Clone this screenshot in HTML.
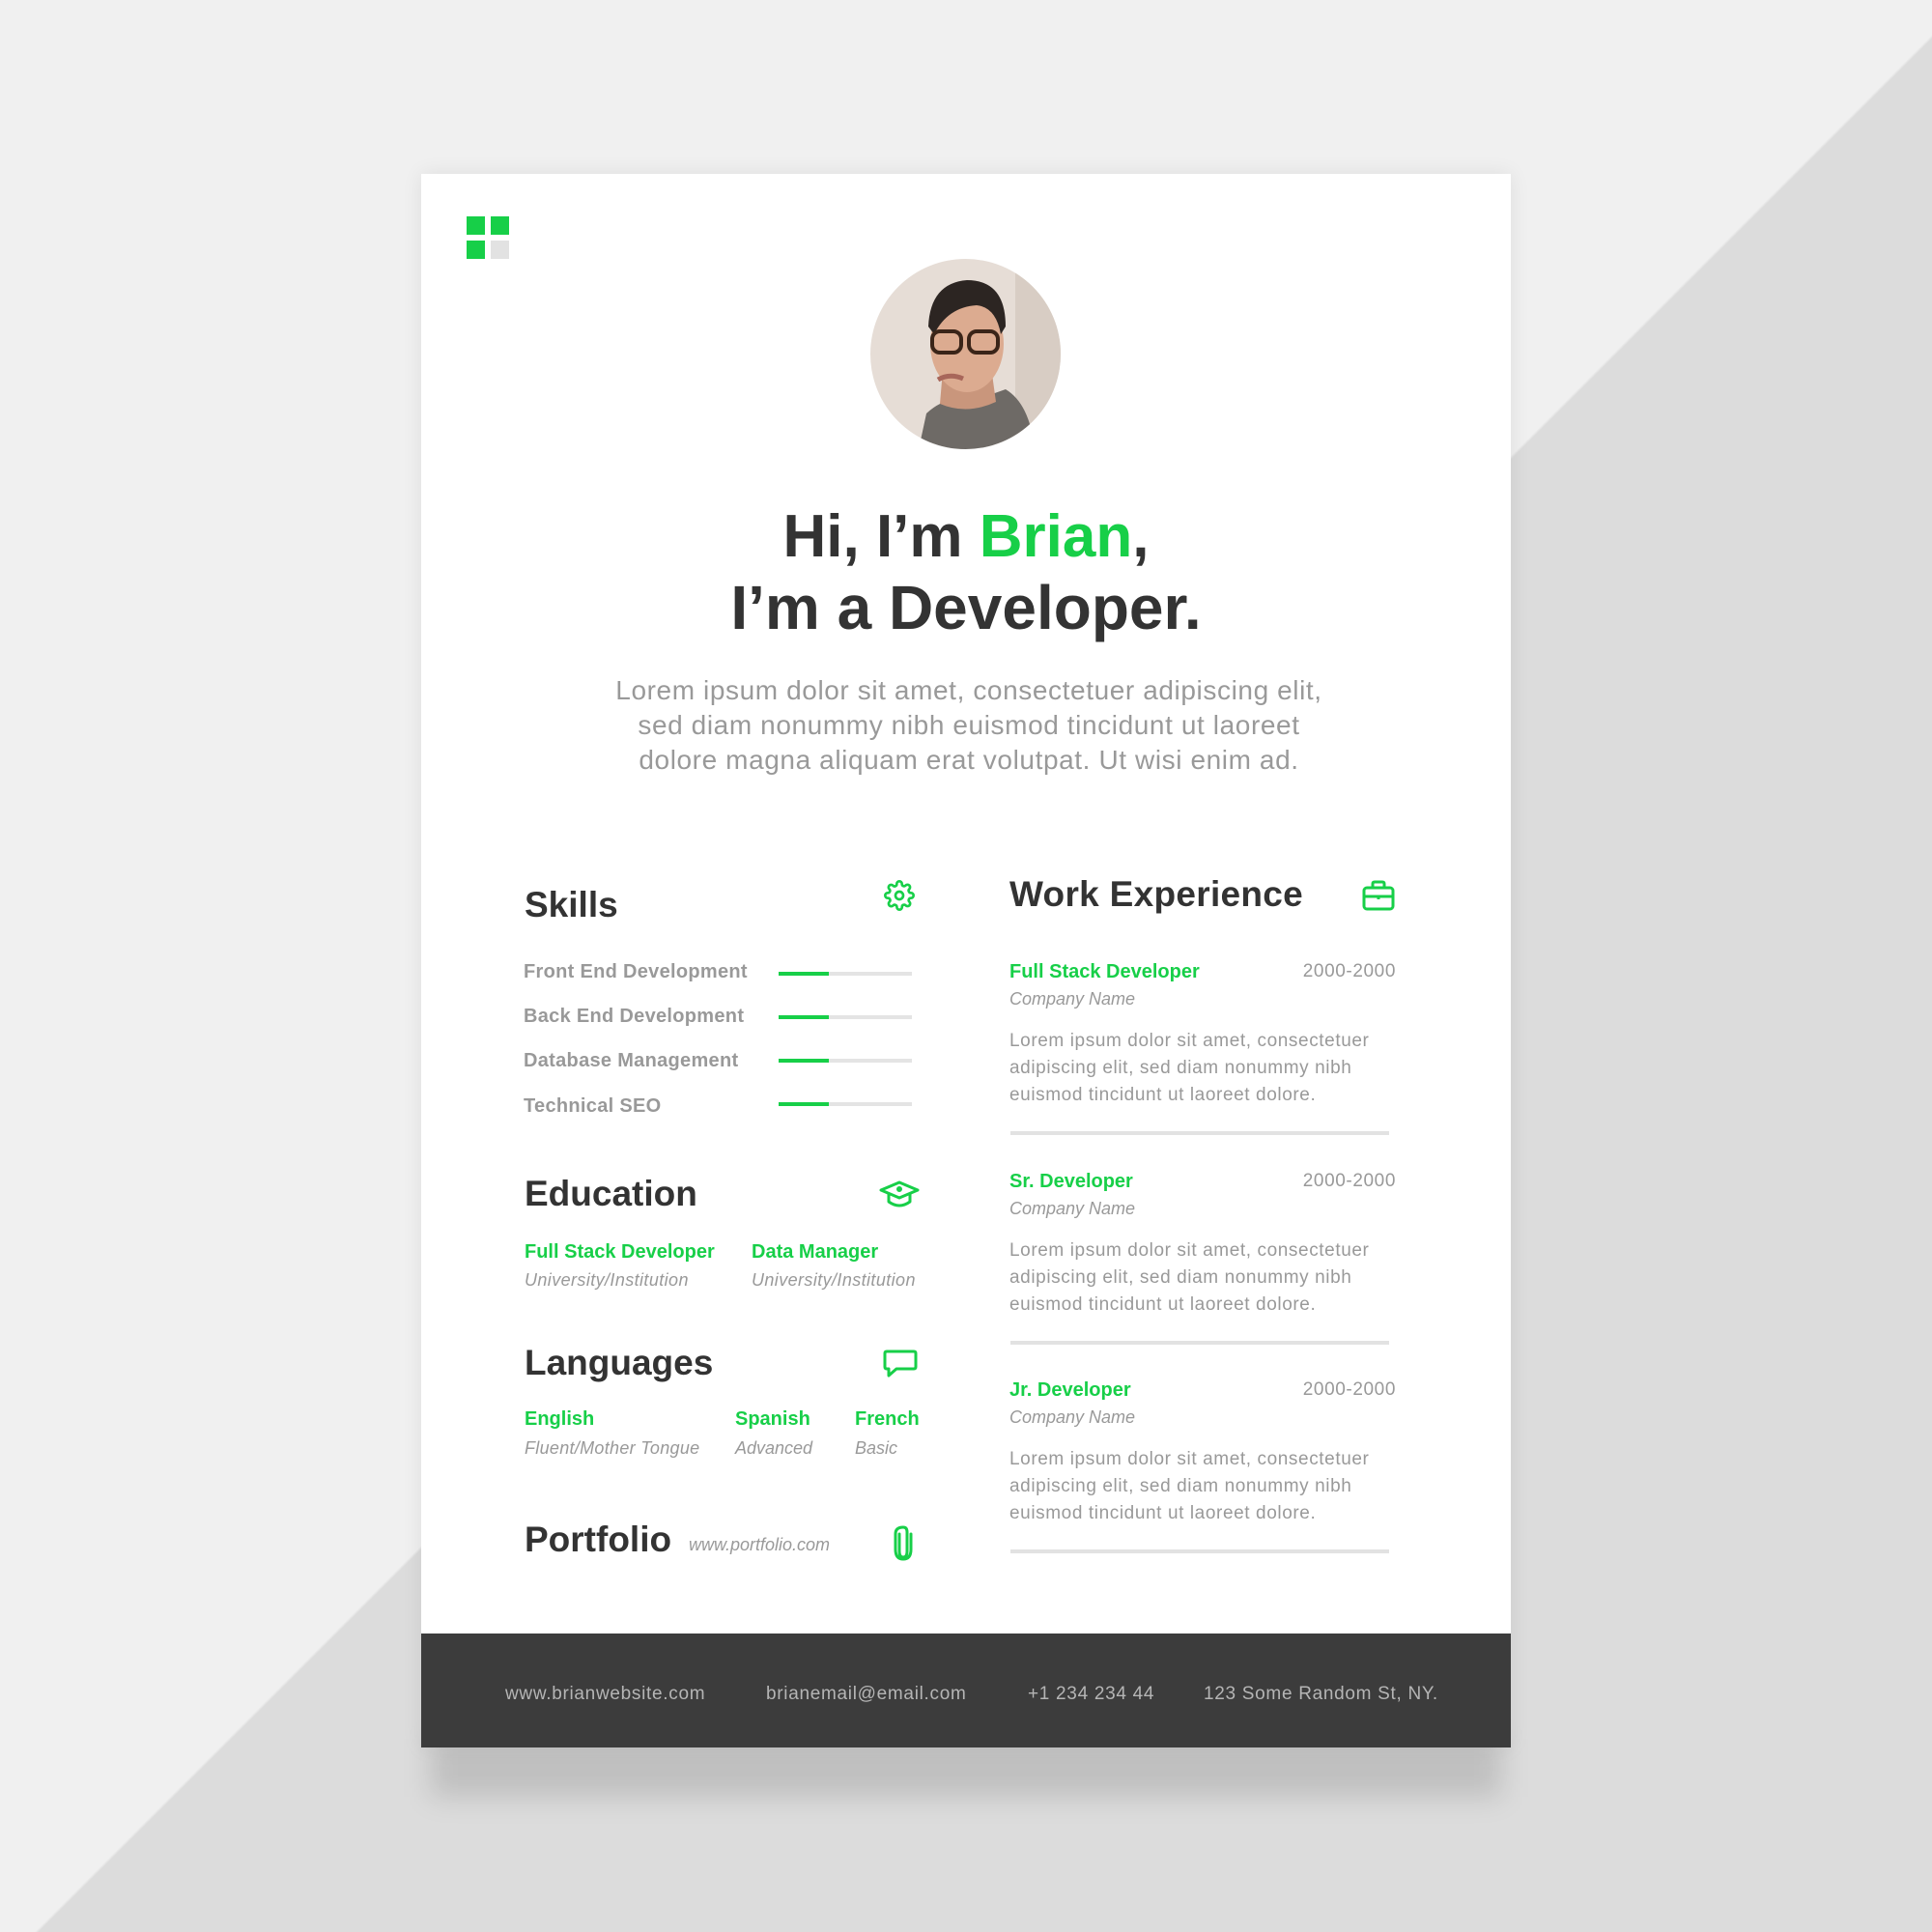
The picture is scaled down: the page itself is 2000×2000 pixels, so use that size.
<!DOCTYPE html>
<html><head><meta charset="utf-8"><style>
*{margin:0;padding:0;box-sizing:border-box}
body{width:2000px;height:2000px;position:relative;overflow:hidden;background:#f0f0f0;font-family:"Liberation Sans",sans-serif}
.bg{position:absolute;inset:0;background:linear-gradient(to bottom right,#f0f0f0 0,#f0f0f0 50.9%,#dcdcdc 51%,#dcdcdc 100%)}
.paper{position:absolute;left:436px;top:180px;width:1128px;height:1629px;background:#fff;box-shadow:0 0 20px rgba(0,0,0,.08)}
.shadow{position:absolute;left:446px;top:1800px;width:1108px;height:60px;background:rgba(0,0,0,.13);filter:blur(14px)}
.t{position:absolute;white-space:nowrap}
.h{color:#333;font-weight:bold}
.g{color:#17cf48;font-weight:bold}
.gr{color:#999}
.i{font-style:italic;color:#999}
.bar{position:absolute;height:4px;width:138px;background:#e4e4e4;left:806px}
.bar i{display:block;height:4px;width:52px;background:#17cf48}
.div{position:absolute;left:1046px;width:392px;height:4px;background:#e2e2e2}
.foot{position:absolute;left:436px;top:1691px;width:1128px;height:118px;background:#3c3c3c}
.ft{position:absolute;top:1742px;font-size:19px;color:#b5b5b5;line-height:24px;letter-spacing:0.7px}
.desc{font-size:19px;line-height:28px;letter-spacing:0.6px}
</style></head><body>
<div class="bg"></div>
<div class="shadow"></div>
<div class="paper"></div>
<div style="position:absolute;left:483px;top:224px;width:19px;height:19px;background:#17cf48"></div>
<div style="position:absolute;left:508px;top:224px;width:19px;height:19px;background:#17cf48"></div>
<div style="position:absolute;left:483px;top:249px;width:19px;height:19px;background:#17cf48"></div>
<div style="position:absolute;left:508px;top:249px;width:19px;height:19px;background:#e2e2e2"></div>
<svg style="position:absolute;left:901px;top:268px" width="197" height="197" viewBox="0 0 197 197">
<defs><clipPath id="c"><circle cx="98.5" cy="98.5" r="98.5"/></clipPath></defs>
<g clip-path="url(#c)">
<rect width="197" height="197" fill="#e6ddd6"/>
<rect x="150" width="47" height="197" fill="#d8cdc4"/>
<path d="M50 197 L58 160 Q80 140 98 150 L140 135 Q165 150 170 197Z" fill="#6e6a66"/>
<path d="M72 150 L75 115 L125 112 L130 148 Q100 162 72 150Z" fill="#c9967c"/>
<ellipse cx="100" cy="88" rx="38" ry="50" fill="#dcab90"/>
<path d="M60 70 Q62 25 100 22 Q140 22 140 70 L135 78 Q130 50 110 48 Q80 50 66 78Z" fill="#2c2522"/>
<rect x="64" y="75" width="30" height="22" rx="8" fill="none" stroke="#3a2418" stroke-width="4"/>
<rect x="102" y="75" width="30" height="22" rx="8" fill="none" stroke="#3a2418" stroke-width="4"/>
<path d="M70 125 Q82 118 96 124" stroke="#a8665a" stroke-width="5" fill="none"/>
</g></svg>
<div class="t h" style="left:0;width:2000px;text-align:center;top:513px;font-size:62px;line-height:86px">Hi, I’m <span style="color:#17cf48">Brian</span>,</div>
<div class="t h" style="left:0;width:2000px;text-align:center;top:586px;font-size:64px;line-height:86px">I’m a Developer.</div>
<div class="t gr" style="left:0;width:2006px;text-align:center;top:697px;font-size:28px;line-height:36px;letter-spacing:0.6px;white-space:normal">Lorem ipsum dolor sit amet, consectetuer adipiscing elit,<br>sed diam nonummy nibh euismod tincidunt ut laoreet<br>dolore magna aliquam erat volutpat. Ut wisi enim ad.</div>
<div class="t h" style="left:543px;top:915px;font-size:37px;line-height:44px">Skills</div>
<svg style="position:absolute;left:915px;top:911px" width="32" height="32" viewBox="0 0 24 24" fill="none" stroke="#17cf48" stroke-width="2"><circle cx="12" cy="12" r="3"/><path d="M19.4 15a1.65 1.65 0 0 0 .33 1.820l.06.06a2 2 0 1 1-2.830 2.830l-.06-.06a1.650 1.650 0 0 0-1.820-.33 1.650 1.650 0 0 0-1 1.510V21a2 2 0 1 1-4 0v-.09A1.650 1.650 0 0 0 9 19.4a1.650 1.650 0 0 0-1.820.33l-.06.06a2 2 0 1 1-2.830-2.830l.06-.06A1.650 1.650 0 0 0 4.680 15a1.650 1.650 0 0 0-1.510-1H3a2 2 0 1 1 0-4h.09A1.650 1.650 0 0 0 4.600 9a1.650 1.650 0 0 0-.33-1.820l-.06-.06a2 2 0 1 1 2.830-2.830l.06.06A1.650 1.650 0 0 0 9 4.680 1.650 1.650 0 0 0 10 3.170V3a2 2 0 1 1 4 0v.09a1.650 1.650 0 0 0 1 1.510 1.650 1.650 0 0 0 1.820-.33l.06-.06a2 2 0 1 1 2.830 2.830l-.06.06A1.650 1.650 0 0 0 19.4 9a1.650 1.650 0 0 0 1.510 1H21a2 2 0 1 1 0 4h-.09a1.650 1.650 0 0 0-1.510 1z"/></svg>
<div class="t gr" style="left:542px;top:994px;font-size:20px;line-height:24px;font-weight:bold;letter-spacing:0.3px">Front End Development</div>
<div class="t gr" style="left:542px;top:1040px;font-size:20px;line-height:24px;font-weight:bold;letter-spacing:0.3px">Back End Development</div>
<div class="t gr" style="left:542px;top:1086px;font-size:20px;line-height:24px;font-weight:bold;letter-spacing:0.3px">Database Management</div>
<div class="t gr" style="left:542px;top:1133px;font-size:20px;line-height:24px;font-weight:bold;letter-spacing:0.3px">Technical SEO</div>
<div class="bar" style="top:1006px"><i></i></div>
<div class="bar" style="top:1051px"><i></i></div>
<div class="bar" style="top:1096px"><i></i></div>
<div class="bar" style="top:1141px"><i></i></div>
<div class="t h" style="left:543px;top:1214px;font-size:37px;line-height:44px">Education</div>
<svg style="position:absolute;left:910px;top:1222px" width="42" height="30" viewBox="0 0 42 30" fill="none" stroke="#17cf48" stroke-width="3" stroke-linejoin="round"><path d="M2 10 L21 2 L40 10 L21 18Z"/><path d="M10 14 V22 Q21 30 32 22 V14"/><circle cx="21" cy="9" r="1.5" fill="#17cf48"/></svg>
<div class="t g" style="left:543px;top:1284px;font-size:20px;line-height:24px">Full Stack Developer</div>
<div class="t i" style="left:543px;top:1314px;font-size:18px;line-height:22px;letter-spacing:0.4px">University/Institution</div>
<div class="t g" style="left:778px;top:1284px;font-size:20px;line-height:24px">Data Manager</div>
<div class="t i" style="left:778px;top:1314px;font-size:18px;line-height:22px;letter-spacing:0.4px">University/Institution</div>
<div class="t h" style="left:543px;top:1389px;font-size:37px;line-height:44px">Languages</div>
<svg style="position:absolute;left:914px;top:1397px" width="36" height="30" viewBox="0 0 36 30" fill="none" stroke="#17cf48" stroke-width="3" stroke-linejoin="round"><path d="M4 2 H32 Q34 2 34 4 V18 Q34 20 32 20 H14 L6 27 V20 H4 Q2 20 2 18 V4 Q2 2 4 2Z"/></svg>
<div class="t g" style="left:543px;top:1457px;font-size:20px;line-height:24px">English</div>
<div class="t i" style="left:543px;top:1488px;font-size:18px;line-height:22px;letter-spacing:0.3px">Fluent/Mother Tongue</div>
<div class="t g" style="left:761px;top:1457px;font-size:20px;line-height:24px">Spanish</div>
<div class="t i" style="left:761px;top:1488px;font-size:18px;line-height:22px">Advanced</div>
<div class="t g" style="left:885px;top:1457px;font-size:20px;line-height:24px">French</div>
<div class="t i" style="left:885px;top:1488px;font-size:18px;line-height:22px">Basic</div>
<div class="t h" style="left:543px;top:1572px;font-size:37px;line-height:44px">Portfolio</div>
<div class="t i" style="left:713px;top:1588px;font-size:18px;line-height:22px">www.portfolio.com</div>
<svg style="position:absolute;left:924px;top:1578px" width="22" height="38" viewBox="0 0 22 38" fill="none" stroke="#17cf48" stroke-width="3" stroke-linecap="round"><path d="M7 10 V28 Q7 34 11 34 Q15 34 15 28 V8 Q15 3 11 3 Q3 3 3 10 V26 Q3 36 11 36 Q19 36 19 26 V10"/></svg>
<div class="t h" style="left:1045px;top:904px;font-size:37px;line-height:44px;letter-spacing:0.3px">Work Experience</div>
<svg style="position:absolute;left:1410px;top:910px" width="34" height="34" viewBox="0 0 34 34" fill="none" stroke="#17cf48" stroke-width="3" stroke-linejoin="round"><rect x="2" y="9" width="30" height="22" rx="3"/><path d="M11 9 V5 Q11 3 13 3 H21 Q23 3 23 5 V9"/><path d="M2 18 H32"/><path d="M17 17 V21"/></svg>
<div class="t g" style="left:1045px;top:994px;font-size:20px;line-height:24px">Full Stack Developer</div>
<div class="t gr" style="left:1245px;width:200px;text-align:right;top:994px;font-size:19px;line-height:24px;letter-spacing:0.6px">2000-2000</div>
<div class="t i" style="left:1045px;top:1023px;font-size:18px;line-height:22px">Company Name</div>
<div class="t gr desc" style="left:1045px;top:1064px">Lorem ipsum dolor sit amet, consectetuer<br>adipiscing elit, sed diam nonummy nibh<br>euismod tincidunt ut laoreet dolore.</div>
<div class="div" style="top:1171px"></div>
<div class="t g" style="left:1045px;top:1211px;font-size:20px;line-height:24px">Sr. Developer</div>
<div class="t gr" style="left:1245px;width:200px;text-align:right;top:1211px;font-size:19px;line-height:24px;letter-spacing:0.6px">2000-2000</div>
<div class="t i" style="left:1045px;top:1240px;font-size:18px;line-height:22px">Company Name</div>
<div class="t gr desc" style="left:1045px;top:1281px">Lorem ipsum dolor sit amet, consectetuer<br>adipiscing elit, sed diam nonummy nibh<br>euismod tincidunt ut laoreet dolore.</div>
<div class="div" style="top:1388px"></div>
<div class="t g" style="left:1045px;top:1427px;font-size:20px;line-height:24px">Jr. Developer</div>
<div class="t gr" style="left:1245px;width:200px;text-align:right;top:1427px;font-size:19px;line-height:24px;letter-spacing:0.6px">2000-2000</div>
<div class="t i" style="left:1045px;top:1456px;font-size:18px;line-height:22px">Company Name</div>
<div class="t gr desc" style="left:1045px;top:1497px">Lorem ipsum dolor sit amet, consectetuer<br>adipiscing elit, sed diam nonummy nibh<br>euismod tincidunt ut laoreet dolore.</div>
<div class="div" style="top:1604px"></div>
<div class="foot"></div>
<div class="ft" style="left:523px">www.brianwebsite.com</div>
<div class="ft" style="left:793px">brianemail@email.com</div>
<div class="ft" style="left:1064px">+1 234 234 44</div>
<div class="ft" style="left:1246px">123 Some Random St, NY.</div>
</body></html>
